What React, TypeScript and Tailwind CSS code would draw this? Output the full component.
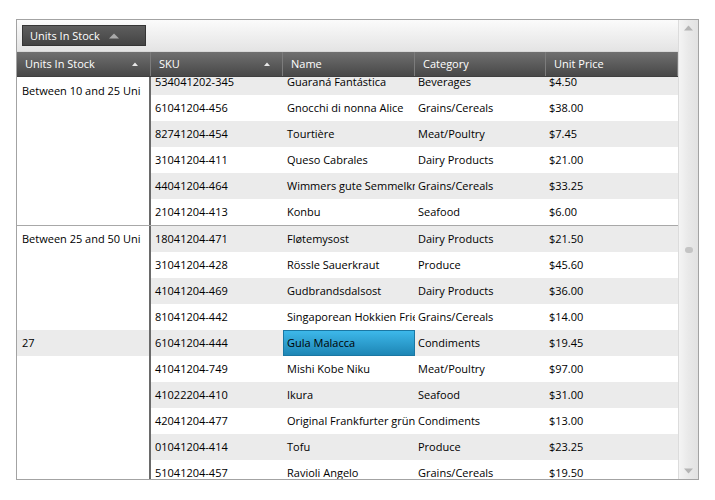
import React from "react";

type Row = { sku: string; name: string; category: string; price: string };

const groups: { label: string; labelBg?: boolean; topPad?: string; sep?: boolean; rows: Row[] }[] = [
  {
    label: "Between 10 and 25 Uni",
    topPad: "pt-[14px]",
    rows: [
      { sku: "534041202-345", name: "Guaraná Fantástica", category: "Beverages", price: "$4.50" },
      { sku: "61041204-456", name: "Gnocchi di nonna Alice", category: "Grains/Cereals", price: "$38.00" },
      { sku: "82741204-454", name: "Tourtière", category: "Meat/Poultry", price: "$7.45" },
      { sku: "31041204-411", name: "Queso Cabrales", category: "Dairy Products", price: "$21.00" },
      { sku: "44041204-464", name: "Wimmers gute Semmelknödel", category: "Grains/Cereals", price: "$33.25" },
      { sku: "21041204-413", name: "Konbu", category: "Seafood", price: "$6.00" },
    ],
  },
  {
    label: "Between 25 and 50 Uni",
    sep: true,
    rows: [
      { sku: "18041204-471", name: "Fløtemysost", category: "Dairy Products", price: "$21.50" },
      { sku: "31041204-428", name: "Rössle Sauerkraut", category: "Produce", price: "$45.60" },
      { sku: "41041204-469", name: "Gudbrandsdalsost", category: "Dairy Products", price: "$36.00" },
      { sku: "81041204-442", name: "Singaporean Hokkien Fried Mee", category: "Grains/Cereals", price: "$14.00" },
    ],
  },
  {
    label: "27",
    labelBg: true,
    rows: [
      { sku: "61041204-444", name: "Gula Malacca", category: "Condiments", price: "$19.45" },
      { sku: "41041204-749", name: "Mishi Kobe Niku", category: "Meat/Poultry", price: "$97.00" },
      { sku: "41022204-410", name: "Ikura", category: "Seafood", price: "$31.00" },
      { sku: "42041204-477", name: "Original Frankfurter grüne Soße", category: "Condiments", price: "$13.00" },
      { sku: "01041204-414", name: "Tofu", category: "Produce", price: "$23.25" },
      { sku: "51041204-457", name: "Ravioli Angelo", category: "Grains/Cereals", price: "$19.50" },
    ],
  },
];

function SortArrow() {
  return (
    <svg width="6" height="4" viewBox="0 0 6 4" className="shrink-0">
      <path d="M0 4 L3 0.5 L6 4 Z" fill="#e8e8e8" />
    </svg>
  );
}

function HeaderCell({ title, w, sort }: { title: string; w: string; sort?: boolean }) {
  return (
    <div className={`${w} h-full flex items-center justify-between pl-[8px] pr-[12px] border-r border-[#7c7c7c] shrink-0`}>
      <span className="truncate">{title}</span>
      {sort && <SortArrow />}
    </div>
  );
}

export default function App() {
  let idx = 0;
  return (
    <div
      className="w-[715px] h-[500px] bg-white pt-[19px] pl-[16px] text-[11px] text-black"
      style={{ fontFamily: '"Open Sans", "Noto Sans", sans-serif' }}
    >
      <div className="w-[683px] h-[461px] border border-[#a3a3a3] flex overflow-hidden">
        <div className="w-[661px] h-full flex flex-col shrink-0">
          {/* group panel */}
          <div className="h-[32px] shrink-0 bg-gradient-to-b from-[#fbfbfb] to-[#e4e4e4] flex items-center pl-[5px] border-b border-[#d8d8d8]">
            <div className="h-[21px] w-[124px] bg-gradient-to-b from-[#5e5e5e] to-[#444444] border border-[#353535] flex items-center pl-[7px] pt-[1px] gap-[9px] text-white">
              <span>Units In Stock</span>
              <svg width="10" height="6" viewBox="0 0 10 6">
                <path d="M0 5.5 L5 0.5 L10 5.5 Z" fill="#a9a9a9" />
              </svg>
            </div>
          </div>
          {/* header */}
          <div className="h-[25px] shrink-0 bg-gradient-to-b from-[#707070] to-[#484848] flex text-white border-b border-[#3f3f3f]">
            <HeaderCell title="Units In Stock" w="w-[134px]" sort />
            <HeaderCell title="SKU" w="w-[132px]" sort />
            <HeaderCell title="Name" w="w-[132px]" />
            <HeaderCell title="Category" w="w-[131px]" />
            <HeaderCell title="Unit Price" w="w-[132px]" />
          </div>
          {/* body */}
          <div className="flex-1 overflow-hidden relative">
            <div className="mt-[-8px]">
              {groups.map((g) => (
                <div key={g.label} className={`flex ${g.sep ? "border-t border-[#a8a8a8]" : ""}`}>
                  <div className="w-[134px] shrink-0 border-r-2 border-[#6a6a6a] self-stretch">
                    <div
                      className={`h-[26px] flex ${g.topPad ? `items-start ${g.topPad}` : "items-center"} pl-[5px] whitespace-nowrap overflow-hidden ${g.labelBg ? "bg-[#ebebeb]" : ""}`}
                    >
                      {g.label}
                    </div>
                  </div>
                  <div className="flex-1">
                    {g.rows.map((r) => {
                      const grey = idx++ % 2 === 0;
                      const selected = r.name === "Gula Malacca";
                      return (
                        <div key={r.sku} className={`h-[26px] flex items-center ${grey ? "bg-[#ebebeb]" : "bg-white"}`}>
                          <div className="w-[132px] shrink-0 pl-[4px] whitespace-nowrap overflow-hidden">{r.sku}</div>
                          <div
                            className={`w-[132px] h-full shrink-0 flex items-center whitespace-nowrap overflow-hidden ${
                              selected
                                ? "bg-gradient-to-b from-[#3db8ea] to-[#1d86b5] border border-[#1a77a3] pl-[3px]"
                                : "pl-[4px]"
                            }`}
                          >
                            {r.name}
                          </div>
                          <div className="w-[131px] shrink-0 pl-[3px] whitespace-nowrap overflow-hidden">{r.category}</div>
                          <div className="w-[131px] shrink-0 pl-[3px] whitespace-nowrap overflow-hidden">{r.price}</div>
                        </div>
                      );
                    })}
                  </div>
                </div>
              ))}
            </div>
          </div>
        </div>
        {/* scrollbar */}
        <div className="w-[20px] h-full shrink-0 border-l border-[#dcdcdc] bg-gradient-to-r from-[#f4f4f4] via-[#e9e9e9] to-[#e2e2e2] flex flex-col items-center justify-between py-[5px]">
          <svg width="9" height="6" viewBox="0 0 9 6">
            <path d="M0 5.5 L4.5 0.5 L9 5.5 Z" fill="#b4b4b4" />
          </svg>
          <div className="w-[8px] h-[6px] rounded-[3px] bg-[#c4c4c4]" />
          <svg width="9" height="6" viewBox="0 0 9 6">
            <path d="M0 0.5 L4.5 5.5 L9 0.5 Z" fill="#b4b4b4" />
          </svg>
        </div>
      </div>
    </div>
  );
}
